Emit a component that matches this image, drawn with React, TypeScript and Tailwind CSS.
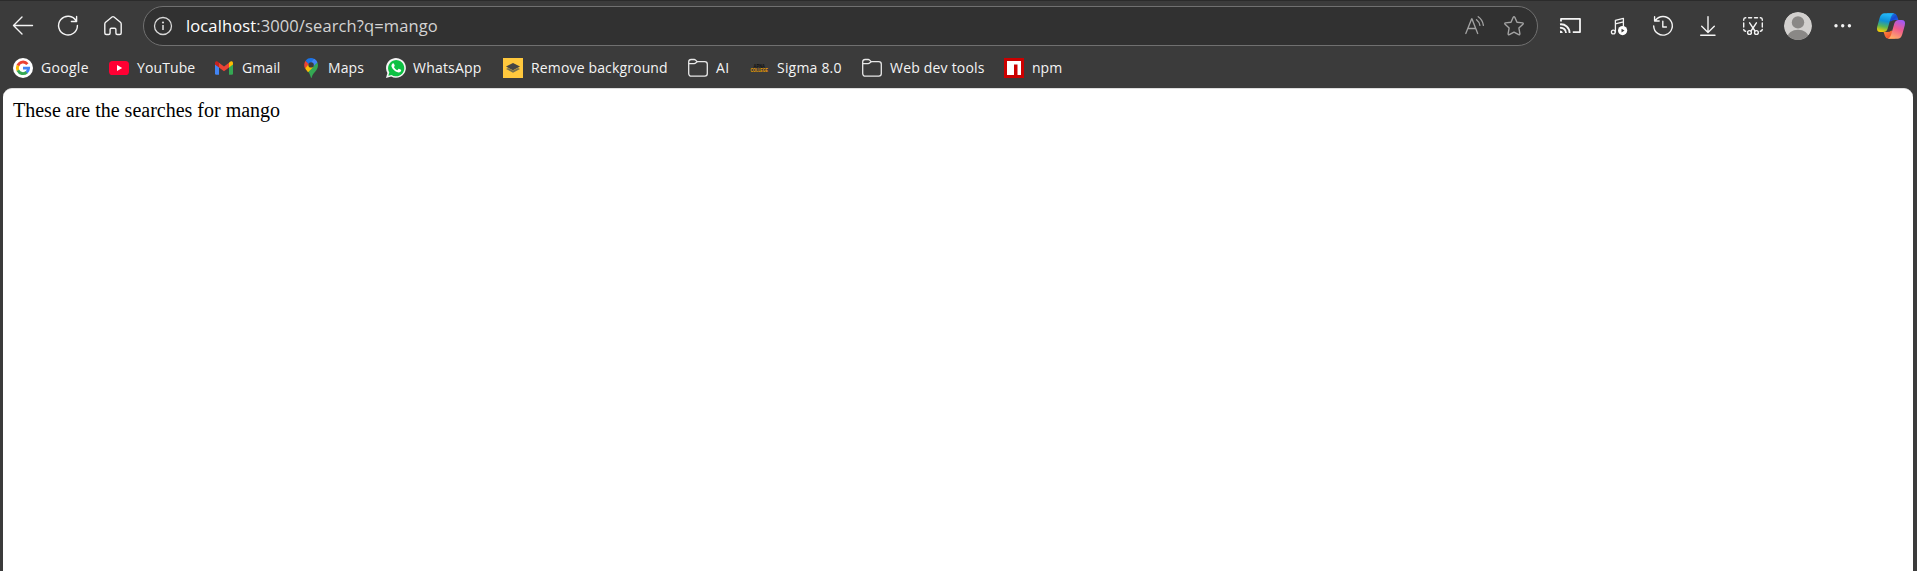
import type { ReactNode } from "react";

type Bookmark = { label: string; width: string; tracking: string; icon: ReactNode };

function ToolIcon({ x, label, children }: { x: number; label: string; children: ReactNode }) {
  return (
    <button aria-label={label} className="h-10 w-[45px] shrink-0">
      <svg
        viewBox={`${x} 6 45 40`}
        className="block h-10 w-[45px]"
        fill="none"
        stroke="#f4f4f4"
        strokeWidth="1.4"
        strokeLinecap="round"
        strokeLinejoin="round"
      >
        {children}
      </svg>
    </button>
  );
}

const Folder = () => (
  <svg viewBox="0 0 20 20" className="size-5" fill="none" stroke="#e8e8e8" strokeWidth="1.3" strokeLinejoin="round">
    <path d="M.7 3.7A2.4 2.4 0 0 1 3.1 1.5H6.2Q7 1.5 7.6 2.1L9.2 3.7H16.7A2.6 2.6 0 0 1 19.3 6.3V15.6A2.6 2.6 0 0 1 16.7 18.2H3.3A2.6 2.6 0 0 1 .7 15.6Z" />
    <path d="M.7 5.6H6.2Q7 5.6 7.6 5L9.2 3.7" />
  </svg>
);

const bookmarks: Bookmark[] = [
  {
    label: "Google",
    width: "w-[96px]",
    tracking: "tracking-[0.3px]",
    icon: (
      <svg viewBox="0 0 20 20" className="size-5">
        <circle cx="10" cy="10" r="10" fill="#fff" />
        <g fill="none" strokeWidth="2.9">
          <path d="M14.4 6.1A5.6 5.6 0 0 0 4.9 7.6" stroke="#ea4335" />
          <path d="M4.95 7.5A5.6 5.6 0 0 0 4.95 12.5" stroke="#fbbc05" />
          <path d="M4.9 12.4A5.6 5.6 0 0 0 13.8 14.1" stroke="#34a853" />
          <path d="M13.6 14.3A5.6 5.6 0 0 0 15.6 10.1H10" stroke="#4285f4" />
        </g>
      </svg>
    ),
  },
  {
    label: "YouTube",
    width: "w-[105px]",
    tracking: "tracking-[0.1px]",
    icon: (
      <svg viewBox="0 0 20 20" className="size-5">
        <rect y="3" width="20" height="14" rx="3.6" fill="#ff0033" />
        <path d="M8 7L13.2 10L8 13Z" fill="#fff" />
      </svg>
    ),
  },
  {
    label: "Gmail",
    width: "w-[86px]",
    tracking: "tracking-[0.1px]",
    icon: (
      <svg viewBox="0 0 20 20" className="size-5">
        <path d="M1 6L5 9V16.7H2.2Q1 16.7 1 15.5Z" fill="#4285f4" />
        <path d="M19 6L15 9V16.7H17.8Q19 16.7 19 15.5Z" fill="#34a853" />
        <path d="M5 4.7L10 8.5L15 4.7V9.4L10 13.2L5 9.4Z" fill="#ea4335" />
        <path d="M1 5.2C1 3 3.2 2.8 4.3 4.1L5 4.7V9.4L1 6.4Z" fill="#c5221f" />
        <path d="M19 5.2C19 3 16.8 2.8 15.7 4.1L15 4.7V9.4L19 6.4Z" fill="#fbbc04" />
      </svg>
    ),
  },
  {
    label: "Maps",
    width: "w-[85px]",
    tracking: "tracking-[0.1px]",
    icon: (
      <svg viewBox="0 0 20 20" className="size-5">
        <path d="M11 19.8C10.2 17 9.5 15.3 7.8 13.2L17.3 4.3C18.5 7 18.1 9.5 16.5 11.9C14.3 14.8 12.6 15.8 11.7 19.4Q11.4 20.4 11 19.8Z" fill="#34a853" />
        <path d="M5 9.5L8.6 5.3L13.3 8.9L8 14.2C6.4 12 5.4 11.2 5 9.5Z" fill="#fbbc04" />
        <path d="M5.6 2.7L9.2 5.7L5 10.5C3.7 7.8 4 4.8 5.6 2.7Z" fill="#ea4335" />
        <path d="M5.6 2.7C8-.4 12.2-.5 14.7 1.2L9.1 6.5Z" fill="#1a73e8" />
        <path d="M14.2.8C15.7 1.6 16.8 2.8 17.4 4.5L13 8.7L10 5.4Z" fill="#4285f4" />
        <circle cx="11.1" cy="6.9" r="2.7" fill="#3b3b3b" />
      </svg>
    ),
  },
  {
    label: "WhatsApp",
    width: "w-[118px]",
    tracking: "tracking-[0.2px]",
    icon: (
      <svg viewBox="0 0 20 20" className="size-5 translate-x-px">
        <path d="M0 20L1.4 14.9A9.9 9.9 0 1 1 5.2 18.6Z" fill="#f4f4f4" />
        <path d="M2.3 17.7L3.3 14.5A8.1 8.1 0 1 1 5.6 16.9Z" fill="#0dc143" />
        <path d="M6.4 5.7C6.9 5.1 7.7 5.2 8 5.8L8.7 7.5C8.8 8 8.2 8.6 7.9 9C8.7 10.6 9.8 11.5 11.4 12.2L12.4 11C12.7 10.7 13 10.8 13.3 10.9L15 11.8C15.3 12 15.2 13 14.7 13.5C13.7 14.6 12.3 14.6 11 14.1C8.6 13.1 6.8 11.5 5.7 9.1C5.2 7.9 5.4 6.6 6.4 5.7Z" fill="#fff" />
      </svg>
    ),
  },
  {
    label: "Remove background",
    width: "w-[185px]",
    tracking: "tracking-[0.15px]",
    icon: (
      <svg viewBox="0 0 20 20" className="size-5">
        <rect width="20" height="20" fill="#ffc83d" />
        <path d="M3 11L5 10L10 12.5L15 10L17 11L10 14.7Z" fill="#77704f" />
        <path d="M3 8.6L10 5L17 8.6L10 12.2Z" fill="#454545" />
      </svg>
    ),
  },
  { label: "AI", width: "w-[61px]", tracking: "tracking-[0.4px]", icon: <Folder /> },
  {
    label: "Sigma 8.0",
    width: "w-[113px]",
    tracking: "tracking-[0.2px]",
    icon: (
      <svg viewBox="0 0 20 20" className="size-5 overflow-visible" fontFamily="Liberation Sans, sans-serif" fontWeight="bold">
        <text x="4.5" y="9.6" fontSize="4.6" textLength="11.5" lengthAdjust="spacingAndGlyphs" fill="#111">APNA</text>
        <text x="1.5" y="13.6" fontSize="5" textLength="17.5" lengthAdjust="spacingAndGlyphs" fill="#f0a000">COLLEGE</text>
      </svg>
    ),
  },
  { label: "Web dev tools", width: "w-[142px]", tracking: "tracking-[0.2px]", icon: <Folder /> },
  {
    label: "npm",
    width: "w-[60px]",
    tracking: "tracking-[0px]",
    icon: (
      <svg viewBox="0 0 20 20" className="size-5">
        <rect width="20" height="20" fill="#cb0000" />
        <path d="M3 3H17V17H13.5V6.5H10V17H3Z" fill="#fff" />
      </svg>
    ),
  },
];

function Toolbar() {
  return (
    <div className="flex h-[46px] items-end">
      <ToolIcon x={0} label="Back">
        <path d="M32.5 25.5H13.5M22 17L13.5 25.5L22 34" />
      </ToolIcon>
      <ToolIcon x={45} label="Refresh">
        <path d="M76.2 21A9.4 9.4 0 1 0 77.4 25.5M76.6 16.5V21.5H71.4" />
      </ToolIcon>
      <ToolIcon x={90} label="Home">
        <path d="M104.8 24Q104.8 22.9 105.6 22.2L112 17Q113 16.2 114 17L120.4 22.2Q121.2 22.9 121.2 24V33Q121.2 34.5 119.7 34.5H117.3Q115.9 34.5 115.9 33V29.5Q115.9 28.2 114.6 28.2H111.4Q110.1 28.2 110.1 29.5V33Q110.1 34.5 108.7 34.5H106.3Q104.8 34.5 104.8 33Z" />
      </ToolIcon>

      <div className="ml-2 flex h-10 w-[1395px] items-center rounded-full border border-[#707070] bg-[#313131]">
        <svg viewBox="0 0 20 20" className="ml-[9px] size-5" fill="none" stroke="#d8d8d8" strokeWidth="1.3">
          <circle cx="10" cy="10" r="8.5" />
          <path d="M10 9V14" strokeWidth="1.6" />
          <circle cx="10" cy="6.5" r="1.1" fill="#d8d8d8" stroke="none" />
        </svg>
        <div className="ml-[13px] flex-1 whitespace-nowrap text-[16.5px] leading-6 tracking-[0.12px] text-[#d4d4d4]">
          <span className="text-white">localhost</span>:3000/search?q=mango
        </div>
        <svg viewBox="1464 15 22 22" className="size-[22px]" fill="none" stroke="#a3a3a3" strokeWidth="1.3" strokeLinecap="round">
          <path d="M1465.8 33.5L1471.6 19H1472L1477.7 33.5M1467.8 28.5H1475.8" />
          <path d="M1476.5 19.7Q1479.3 21.8 1479.9 25.3M1478.2 16.7Q1482.6 19.6 1483.4 25.3" />
        </svg>
        <svg viewBox="1503 15 22 22" className="mr-[12px] ml-[17px] size-[22px]" fill="none" stroke="#a3a3a3" strokeWidth="1.4" strokeLinejoin="round">
          <path d="M1513.2 17.3Q1514 16 1514.8 17.3L1517 22.2L1522.5 22.9Q1523.8 23.2 1522.9 24.2L1518.9 28L1519.9 33.8Q1519.9 35.1 1518.7 34.7L1514 32.1L1509.3 34.7Q1508.1 35.1 1508.1 33.8L1509.1 28L1505.1 24.2Q1504.2 23.2 1505.5 22.9L1511 22.2Z" />
        </svg>
      </div>

      <div className="ml-3 flex">
        <ToolIcon x={1550} label="Cast">
          <g strokeWidth="1.8" strokeLinecap="butt">
            <path d="M1561 21.5V18.9H1580V32.1H1572.8" />
            <path d="M1560 24.3A8.7 8.7 0 0 1 1569.6 33M1560 27.8A5.2 5.2 0 0 1 1566 33" />
            <path d="M1560 30.4A2.7 2.7 0 0 1 1562.7 33H1560Z" fill="#f4f4f4" stroke="none" />
          </g>
        </ToolIcon>
        <ToolIcon x={1595} label="Media controls">
          <g strokeWidth="1.3">
            <circle cx="1613.3" cy="32" r="1.9" />
            <path d="M1615.4 32V20.3L1623.4 18.4V26M1615.4 23.8L1623.4 21.8" />
          </g>
          <circle cx="1622.6" cy="30.6" r="4.6" fill="#fff" stroke="none" />
          <path d="M1621.5 28.7L1624.5 30.6L1621.5 32.5Z" fill="#3b3b3b" stroke="none" />
        </ToolIcon>
        <ToolIcon x={1640} label="History">
          <path d="M1655.5 20.3A9.3 9.3 0 1 1 1653.7 26M1654.6 16.8V21H1659.2M1662.8 21.3V27H1666.4" />
        </ToolIcon>
        <ToolIcon x={1685} label="Downloads">
          <path d="M1708 16.6V32M1701.7 26.3L1708 32.4L1714.3 26.3M1700.7 35.3H1715" />
        </ToolIcon>
        <ToolIcon x={1730} label="Screenshot">
          <path d="M1745.8 17.7H1745.5Q1743.7 17.8 1743.7 19.7V20.2M1743.7 23V27M1743.7 29.4Q1743.8 31 1745.6 31.3M1748.6 17.7H1751.6M1754.5 17.7H1757.5M1760.3 17.7H1760.6Q1762.3 17.8 1762.3 19.7V20.2M1762.3 23V27M1762.3 29.4Q1762.2 31 1760.4 31.3" />
          <path d="M1749.6 22.8L1755 31M1756.4 22.8L1751 31" />
          <circle cx="1749.5" cy="32.5" r="1.9" />
          <circle cx="1756.4" cy="32.5" r="1.9" />
        </ToolIcon>
        <ToolIcon x={1775} label="Profile">
          <clipPath id="avatar">
            <circle cx="1798" cy="26" r="14" />
          </clipPath>
          <g clipPath="url(#avatar)" stroke="none">
            <circle cx="1798" cy="26" r="14" fill="#d2d0ce" />
            <circle cx="1798" cy="22.4" r="6.2" fill="#8a8886" />
            <ellipse cx="1798" cy="37" rx="10.6" ry="7.2" fill="#8a8886" />
          </g>
        </ToolIcon>
        <ToolIcon x={1820} label="More">
          <g fill="#f4f4f4" stroke="none">
            <circle cx="1836" cy="25.7" r="1.7" />
            <circle cx="1842.7" cy="25.7" r="1.7" />
            <circle cx="1849.4" cy="25.7" r="1.7" />
          </g>
        </ToolIcon>
        <button aria-label="Copilot" className="h-10 w-[52px]">
          <svg viewBox="1865 6 52 40" className="block h-10 w-[52px]">
            <defs>
              <linearGradient id="cool" x1=".2" y1="0" x2="0" y2="1">
                <stop offset="0" stopColor="#22b5f5" />
                <stop offset=".35" stopColor="#0e8fd6" />
                <stop offset=".65" stopColor="#58b456" />
                <stop offset=".95" stopColor="#ffd000" />
              </linearGradient>
              <linearGradient id="warm" x1=".7" y1="0" x2=".3" y2="1">
                <stop offset="0" stopColor="#a259f5" />
                <stop offset=".45" stopColor="#ef5a8d" />
                <stop offset="1" stopColor="#ffb066" />
              </linearGradient>
              <linearGradient id="blue" x1="0" y1="0" x2="1" y2="1">
                <stop offset="0" stopColor="#1c9be8" />
                <stop offset=".6" stopColor="#1548d2" />
                <stop offset="1" stopColor="#2b67ee" />
              </linearGradient>
              <linearGradient id="orange" x1="0" y1="0" x2="1" y2="1">
                <stop offset="0" stopColor="#ff8a3d" />
                <stop offset="1" stopColor="#e63a2b" />
              </linearGradient>
            </defs>
            <path d="M1887 13.2H1893.5Q1896.2 13.2 1897.1 16L1898.4 20H1895Q1892 20 1890.6 21.5L1889 20Z" fill="url(#blue)" />
            <path d="M1895 38.8H1888.5Q1885.8 38.8 1884.9 36L1883.6 32H1887Q1890 32 1891.4 30.5L1893 32Z" fill="url(#orange)" />
            <path d="M1884.5 13.2H1894Q1891.8 14.2 1891 17L1887.7 28.5Q1886.7 32 1883.2 32H1880.5Q1876 32 1877.2 26.8L1879.7 17.7Q1881 13.2 1884.5 13.2Z" fill="url(#cool)" />
            <path d="M1897.5 38.8H1888Q1890.2 37.8 1891 35L1894.3 23.5Q1895.3 20 1898.8 20H1901.5Q1906 20 1904.8 25.2L1902.3 34.3Q1901 38.8 1897.5 38.8Z" fill="url(#warm)" />
          </svg>
        </button>
      </div>
    </div>
  );
}

export default function App() {
  return (
    <div className="flex h-[571px] w-[1917px] flex-col overflow-hidden bg-[#3b3b3b] font-['Open_Sans','Noto_Sans',sans-serif] shadow-[inset_0_1px_0_#2b2b2b]">
      <Toolbar />
      <nav className="flex h-[42px] items-center pt-[2px] pl-[13px]">
        {bookmarks.map((b) => (
          <a key={b.label} className={`flex shrink-0 items-center gap-2 ${b.width}`}>
            <span className="size-5 shrink-0">{b.icon}</span>
            <span className={`whitespace-nowrap text-[14px] leading-5 text-[#f4f4f4] ${b.tracking}`}>{b.label}</span>
          </a>
        ))}
      </nav>
      <main className="mr-1 ml-[3px] flex-1 rounded-t-[9px] border-t border-[#dddddd] bg-white px-2.5 pt-[10px] font-['Liberation_Serif',serif] text-[20px] leading-[23px] text-black">
        These are the searches for mango
      </main>
    </div>
  );
}
